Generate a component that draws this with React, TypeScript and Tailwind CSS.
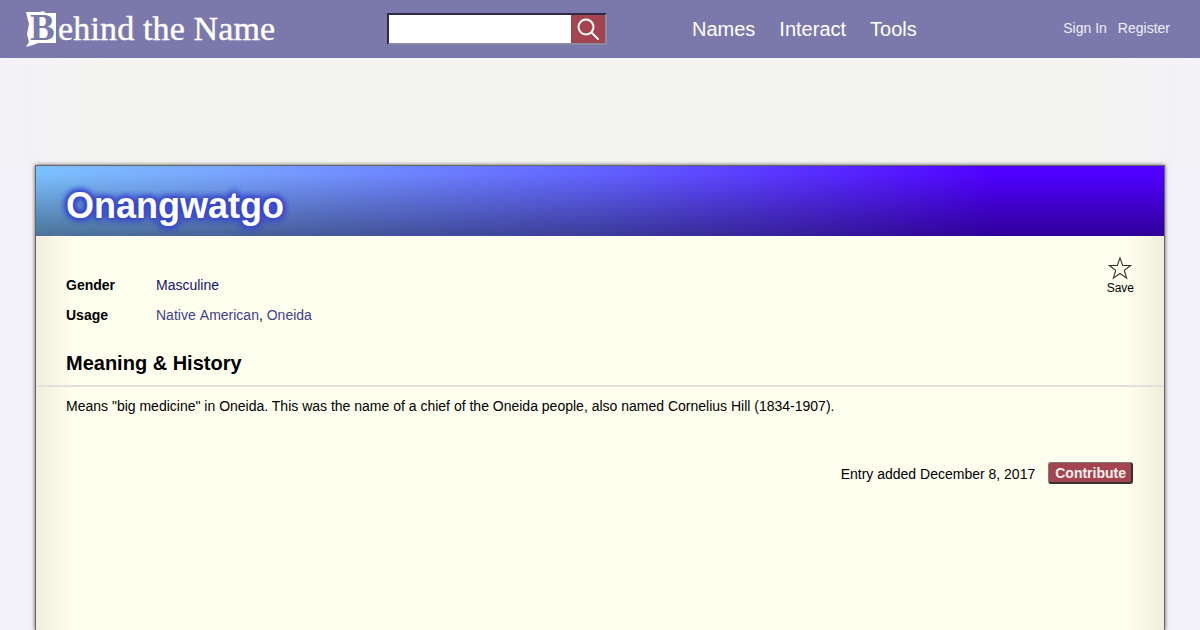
const sans = 'font-["Liberation_Sans",Arial,sans-serif]'

function Logo() {
  return (
    <div className="flex items-center w-[250px] ml-[25px] text-white">
      <div className="relative w-[32px] h-[36px] shrink-0">
        <svg width="32" height="36" viewBox="0 0 32 36" className="absolute inset-0">
          <path d="M1 1h14l3-1 3 2h10v30H13l-5 2-7 2 3-5-2-8 2-10z" fill="#ffffff" />
        </svg>
        <span className='absolute left-[5px] top-[-3px] text-[37px] leading-[40px] font-bold text-[#7b79ab] font-["Liberation_Serif",serif]'>
          B
        </span>
      </div>
      <span className='ml-[1px] text-[34px] leading-[40px] whitespace-nowrap tracking-[0.15px] font-["Liberation_Serif",serif] [-webkit-text-stroke:0.4px_white]'>
        ehind the Name
      </span>
    </div>
  )
}

function SearchBox() {
  return (
    <div className="flex ml-[112px] w-[220px] h-[32px] border-t-2 border-l-2 border-[#2e2b48] border-b-2 border-b-[#8b8a9c] border-r-2 border-r-[#8b8a9c]">
      <div className="w-[182px] bg-white" />
      <div className="flex-1 flex items-center justify-center bg-[#a34450]">
        <svg width="22" height="22" viewBox="0 0 22 22" fill="none" stroke="#ffffff" strokeWidth="2">
          <circle cx="9" cy="9" r="7.5" />
          <path d="M14.5 14.5L21 21" strokeLinecap="round" />
        </svg>
      </div>
    </div>
  )
}

export default function App() {
  return (
    <div className={`min-h-screen h-[630px] overflow-hidden bg-[#f2f2f8] ${sans}`}>
      <header className="flex items-center h-[58px] bg-[#7b79ab]">
        <Logo />
        <SearchBox />
        <nav className="flex gap-6 ml-[85px] text-[20px] text-white">
          <span>Names</span>
          <span>Interact</span>
          <span>Tools</span>
        </nav>
        <div className="flex gap-[11px] ml-auto mr-[30px] mb-[3px] text-sm text-[#eeeef6]">
          <span>Sign In</span>
          <span>Register</span>
        </div>
      </header>

      {/* ad slot */}
      <div className="h-[107px] bg-[linear-gradient(to_right,#f2f2f8,#f4f4f1_110px,#f4f4f1_1080px,#f2f2f8)]" />

      <main className="mx-[35px] h-[465px] border border-b-0 border-[#666666] shadow-[0_0_4px_rgba(0,0,0,0.65)]">
        <div className="flex items-center h-[70px] pl-[30px] pt-[10px] bg-[linear-gradient(to_bottom,rgba(0,0,0,0),rgba(0,0,0,0)_10%,rgba(0,0,0,0.4)),linear-gradient(to_right,#7cc0ff,#7aa8ff_15%,#6262ff_50%,#4f00ff_85%)]">
          <h1 className="text-[36px] font-bold text-white [text-shadow:0_0_6px_#3a48cc,0_0_6px_#3a48cc,0_0_6px_#3a48cc,0_0_6px_#3a48cc,0_0_6px_#3a48cc]">
            Onangwatgo
          </h1>
        </div>

        <div className="relative h-[395px] text-sm text-black bg-[linear-gradient(to_right,#f3eedc,#fffff0_40px,#fffff0_calc(100%-40px),#f3eedc)]">
          <div className="absolute top-[20px] right-[30px] flex flex-col items-center text-xs leading-[14px]">
            <svg width="24" height="25" viewBox="0 0 26 26" fill="none" stroke="#333333" strokeWidth="1.2">
              <path d="M13 1.5l2.9 8.3h8.6l-6.9 5.2 2.6 8.4-7.2-5-7.2 5 2.6-8.4-6.9-5.2h8.6z" />
            </svg>
            <span>Save</span>
          </div>

          <div className="pl-[30px] pt-[34px]">
            <div className="flex h-[30px] items-center">
              <span className="w-[90px] font-bold">Gender</span>
              <span className="text-[#14146b]">Masculine</span>
            </div>
            <div className="flex h-[30px] items-center">
              <span className="w-[90px] font-bold">Usage</span>
              <span>
                <span className="text-[#3f3f88] [word-spacing:1px]">Native American</span>,{' '}
                <span className="text-[#3f3f88]">Oneida</span>
              </span>
            </div>
          </div>

          <h2 className="mt-[20px] pl-[30px] pb-[9px] text-[20px] leading-[26px] font-bold border-b-2 border-[#e2e2da]">
            Meaning &amp; History
          </h2>
          <p className="pl-[30px] mt-[9px] leading-[20px]">
            Means "big medicine" in Oneida. This was the name of a chief of the Oneida people, also named Cornelius Hill (1834-1907).
          </p>

          <div className="flex items-center justify-end mt-[46px] mr-[31px]">
            <span className="pt-[1px]">Entry added December 8, 2017</span>
            <span className="ml-[13px] pl-[6px] pr-[5px] h-[22px] leading-[21px] font-bold text-[#f8f0f0] bg-[#a34450] rounded-[3px] border border-[#7c7c7c] border-r-2 border-b-2 border-r-[#333333] border-b-[#333333]">
              Contribute
            </span>
          </div>
        </div>
      </main>
    </div>
  )
}
